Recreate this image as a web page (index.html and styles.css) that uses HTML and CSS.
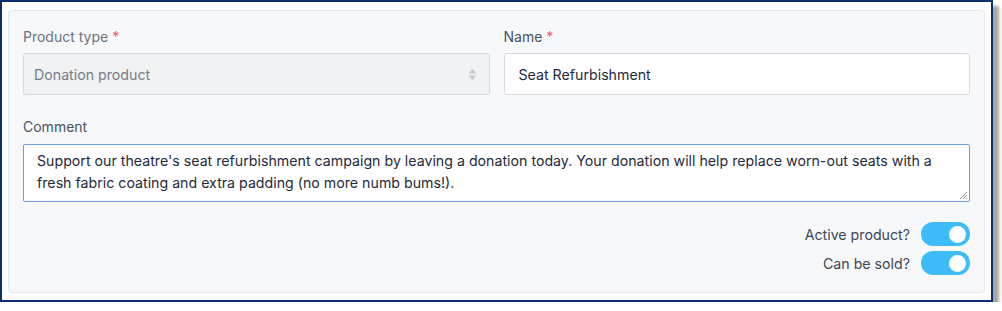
FILE: index.html
```html
<!DOCTYPE html>
<html>
<head>
<meta charset="utf-8">
<link rel="stylesheet" href="styles.css">
</head>
<body>
<div class="frame">
  <div class="card">
    <div class="row">
      <div class="field">
        <label class="label muted">Product type <span class="req">*</span></label>
        <div class="select">
          <span>Donation product</span>
          <svg class="arrows" width="9" height="13" viewBox="0 0 9 13"><path d="M4.5 1 L8.5 5.5 H0.5 Z" fill="#c6cad1"/><path d="M4.5 12 L8.5 7.5 H0.5 Z" fill="#c6cad1"/></svg>
        </div>
      </div>
      <div class="field">
        <label class="label">Name <span class="req">*</span></label>
        <div class="input">Seat Refurbishment</div>
      </div>
    </div>
    <div class="field full">
      <label class="label">Comment</label>
      <div class="textarea">Support our theatre's seat refurbishment campaign by leaving a donation today. Your donation will help replace worn-out seats with a fresh fabric coating and extra padding (no more numb bums!).
        <svg class="grip" width="10" height="10" viewBox="0 0 10 10"><path d="M9 2 L2 9 M9 5 L5 9 M9 8 L8 9" stroke="#8a8f98" stroke-width="1"/></svg>
      </div>
    </div>
    <div class="toggles">
      <div class="toggle-row"><span>Active product?</span><span class="switch"><span class="knob"></span></span></div>
      <div class="toggle-row"><span>Can be sold?</span><span class="switch"><span class="knob"></span></span></div>
    </div>
  </div>
</div>
</body>
</html>
```
FILE: styles.css
```css
* { box-sizing: border-box; }
html, body { margin: 0; padding: 0; background: #fff; }
body { font-family: Inter, "Noto Sans", sans-serif; }
.frame {
  width: 993px;
  height: 302px;
  border: 2px solid #0c2f6b;
  background: #fff;
  box-shadow: 6px 6px 3px rgba(0,0,0,0.35);
  padding: 8px 6px 7px 6px;
}
.card {
  height: 100%;
  background: #f7f8fa;
  border: 1px solid #e2e6ee;
  border-radius: 4px;
  padding: 17px 14px 0 14px;
}
.row { display: flex; gap: 14px; }
.field { flex: 1; display: flex; flex-direction: column; }
.label {
  font-size: 14px;
  color: #4a5263;
  height: 17px;
  line-height: 17px;
  margin-bottom: 8px;
}
.label.muted { color: #6b7383; }
.req { color: #ee5b66; }
.select {
  height: 42px;
  border: 1px solid #d6d9df;
  border-radius: 3px;
  background: #f1f2f4;
  display: flex;
  align-items: center;
  justify-content: space-between;
  padding: 0 12px 0 10px;
  font-size: 14.2px;
  color: #757c8a;
}
.input {
  height: 42px;
  border: 1px solid #d6d9df;
  border-radius: 3px;
  background: #fff;
  display: flex;
  align-items: center;
  padding: 0 14px;
  font-size: 14.2px;
  color: #1f2a3c;
}
.full { margin-top: 23px; }
.full .label { margin-bottom: 9px; }
.textarea {
  position: relative;
  height: 58px;
  border: 1px solid #6a9fe6;
  border-radius: 2px;
  background: #fff;
  padding: 5px 13px;
  font-size: 14.2px;
  line-height: 22px;
  color: #1f2a3c;
}
.grip { position: absolute; right: 1px; bottom: 1px; }
.toggles {
  display: flex;
  flex-direction: column;
  align-items: flex-end;
  gap: 5px;
  margin-top: 20px;
}
.toggle-row {
  display: flex;
  align-items: center;
  gap: 11px;
  font-size: 14.2px;
  color: #3d4556;
}
.switch {
  width: 49px;
  height: 24px;
  border-radius: 12px;
  background: #3ebcf7;
  display: flex;
  align-items: center;
  justify-content: flex-end;
  padding-right: 4px;
}
.knob {
  width: 17px;
  height: 17px;
  border-radius: 50%;
  background: #fff;
}
```
